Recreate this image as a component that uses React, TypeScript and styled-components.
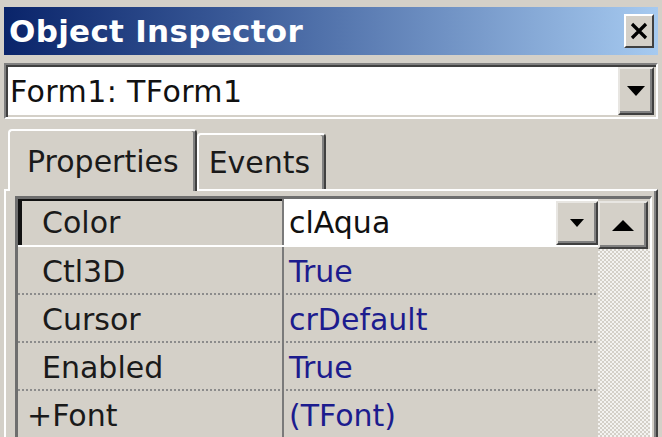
import React from "react";
import styled, { createGlobalStyle } from "styled-components";

const Global = createGlobalStyle`
  html, body { margin: 0; padding: 0; }
  body {
    background: #d4d0c8;
    width: 662px;
    height: 437px;
    overflow: hidden;
    font-family: "DejaVu Sans", Verdana, sans-serif;
  }
`;

const Window = styled.div`
  width: 662px;
  height: 437px;
  box-sizing: border-box;
  padding: 7px 4px 0 4px;
  display: flex;
  flex-direction: column;
  overflow: hidden;
`;

const TitleBar = styled.div`
  height: 48px;
  flex: none;
  display: flex;
  align-items: center;
  justify-content: space-between;
  padding: 0 4px 0 5px;
  background: linear-gradient(to right, #0a246a 0%, #3a5a98 35%, #a6caf0 100%);
`;

const Title = styled.span`
  color: #fff;
  font-weight: bold;
  font-size: 31px;
  letter-spacing: 0.3px;
  line-height: 1;
`;

const CloseButton = styled.div`
  width: 30px;
  height: 34px;
  box-sizing: border-box;
  background: #d4d0c8;
  border-top: 2px solid #fff;
  border-left: 2px solid #fff;
  border-right: 2px solid #404040;
  border-bottom: 2px solid #404040;
  display: flex;
  align-items: center;
  justify-content: center;
`;

const Combo = styled.div`
  margin-top: 8px;
  height: 56px;
  flex: none;
  box-sizing: border-box;
  display: flex;
  border-top: 2px solid #808080;
  border-left: 2px solid #808080;
  border-right: 2px solid #fff;
  border-bottom: 2px solid #fff;
  box-shadow: inset 2px 2px 0 #404040, inset -2px -2px 0 #d4d0c8;
  background: #fff;
`;

const ComboText = styled.div`
  flex: 1;
  display: flex;
  align-items: center;
  padding-left: 4px;
  font-size: 30px;
  color: #111;
  letter-spacing: 0.4px;
`;

const ArrowButton = styled.div<{ $w: number; $h: number }>`
  width: ${(p) => p.$w}px;
  height: ${(p) => p.$h}px;
  flex: none;
  box-sizing: border-box;
  background: #d4d0c8;
  border-top: 2px solid #e8e6e2;
  border-left: 2px solid #e8e6e2;
  border-right: 2px solid #404040;
  border-bottom: 2px solid #404040;
  box-shadow: inset -2px -2px 0 #808080;
  display: flex;
  align-items: center;
  justify-content: center;
`;

const ComboButtonWrap = styled.div`
  padding: 2px 2px 2px 0;
  display: flex;
`;

const TabStrip = styled.div`
  margin-top: 10px;
  height: 60px;
  flex: none;
  display: flex;
  align-items: flex-end;
  padding-left: 4px;
`;

const Tab = styled.div<{ $active?: boolean }>`
  box-sizing: border-box;
  height: ${(p) => (p.$active ? 62 : 56)}px;
  margin-bottom: ${(p) => (p.$active ? -2 : 0)}px;
  padding: 0 ${(p) => (p.$active ? 16 : 14)}px 0 ${(p) => (p.$active ? 17 : 10)}px;
  display: flex;
  align-items: center;
  font-size: 30px;
  color: #1a1a1a;
  background: #d4d0c8;
  border-top: 2px solid #fff;
  border-left: 2px solid #fff;
  border-right: 2px solid #404040;
  box-shadow: inset -2px 0 0 #808080;
  border-radius: 4px 4px 0 0;
  position: relative;
  z-index: ${(p) => (p.$active ? 2 : 1)};
`;

const Page = styled.div`
  flex: 1;
  box-sizing: border-box;
  border-top: 2px solid #fff;
  border-left: 2px solid #fff;
  border-right: 2px solid #404040;
  box-shadow: inset -2px 0 0 #808080;
  padding: 5px 4px 0 9px;
  display: flex;
  min-height: 0;
`;

const Grid = styled.div`
  flex: 1;
  display: flex;
  box-sizing: border-box;
  border-top: 3px solid #6e6e6e;
  border-left: 3px solid #6e6e6e;
  border-right: 2px solid #fff;
  min-height: 0;
`;

const Rows = styled.div`
  flex: 1;
  display: flex;
  flex-direction: column;
`;

const Row = styled.div<{ $selected?: boolean }>`
  height: 48px;
  flex: none;
  box-sizing: border-box;
  display: flex;
  ${(p) =>
    p.$selected
      ? `border-bottom: 2px solid #fff;`
      : `background-image: linear-gradient(to right, #8c8c8c 50%, transparent 50%);
         background-size: 4px 2px;
         background-repeat: repeat-x;
         background-position: left bottom;`}
`;

const NameCell = styled.div<{ $selected?: boolean; $indent: number }>`
  width: 266px;
  flex: none;
  box-sizing: border-box;
  display: flex;
  align-items: center;
  padding-left: ${(p) => p.$indent}px;
  font-size: 30px;
  color: #1a1a1a;
  border-right: 2px solid #7a7a7a;
  ${(p) => (p.$selected ? `border-left: 4px solid #111; box-shadow: inset 0 2px 0 #111;` : ``)}
`;

const ValueCell = styled.div<{ $selected?: boolean }>`
  flex: 1;
  display: flex;
  align-items: center;
  padding-left: 5px;
  font-size: 30px;
  color: ${(p) => (p.$selected ? "#111" : "#1c1c8e")};
  background: ${(p) => (p.$selected ? "#fff" : "transparent")};
`;

const ValueText = styled.span`
  flex: 1;
`;

const EditorButtonWrap = styled.div`
  align-self: flex-start;
  padding-top: 2px;
  display: flex;
`;

const Scroll = styled.div`
  width: 52px;
  flex: none;
  display: flex;
  flex-direction: column;
  background-color: #fff;
  background-image: repeating-conic-gradient(#d4d0c8 0% 25%, #f4f3f1 0% 50%);
  background-size: 4px 4px;
`;

const ScrollUpWrap = styled.div`
  padding-top: 2px;
  background: #d4d0c8;
  display: flex;
`;

const Triangle = ({ dir, w, h }: { dir: "up" | "down"; w: number; h: number }) => (
  <svg width={w} height={h} viewBox={`0 0 ${w} ${h}`}>
    {dir === "down" ? (
      <polygon points={`0,0 ${w},0 ${w / 2},${h}`} fill="#000" />
    ) : (
      <polygon points={`0,${h} ${w},${h} ${w / 2},0`} fill="#000" />
    )}
  </svg>
);

const props = [
  { name: "Color", value: "clAqua", selected: true },
  { name: "Ctl3D", value: "True" },
  { name: "Cursor", value: "crDefault" },
  { name: "Enabled", value: "True" },
  { name: "+Font", value: "(TFont)", expand: true },
];

export default function App() {
  return (
    <>
      <Global />
      <Window>
        <TitleBar>
          <Title>Object Inspector</Title>
          <CloseButton>
            <svg width="18" height="18" viewBox="0 0 18 18">
              <path d="M2 2 L16 16 M16 2 L2 16" stroke="#000" strokeWidth="3.2" />
            </svg>
          </CloseButton>
        </TitleBar>
        <Combo>
          <ComboText>Form1: TForm1</ComboText>
          <ComboButtonWrap>
            <ArrowButton $w={36} $h={48}>
              <Triangle dir="down" w={18} h={10} />
            </ArrowButton>
          </ComboButtonWrap>
        </Combo>
        <TabStrip>
          <Tab $active>Properties</Tab>
          <Tab>Events</Tab>
        </TabStrip>
        <Page>
          <Grid>
            <Rows>
              {props.map((p) => (
                <Row key={p.name} $selected={p.selected}>
                  <NameCell $selected={p.selected} $indent={p.selected ? 20 : p.expand ? 9 : 24}>
                    {p.name}
                  </NameCell>
                  <ValueCell $selected={p.selected}>
                    <ValueText>{p.value}</ValueText>
                    {p.selected && (
                      <EditorButtonWrap>
                        <ArrowButton $w={42} $h={44}>
                          <Triangle dir="down" w={14} h={8} />
                        </ArrowButton>
                      </EditorButtonWrap>
                    )}
                  </ValueCell>
                </Row>
              ))}
            </Rows>
            <Scroll>
              <ScrollUpWrap>
                <ArrowButton $w={50} $h={48}>
                  <Triangle dir="up" w={22} h={11} />
                </ArrowButton>
              </ScrollUpWrap>
            </Scroll>
          </Grid>
        </Page>
      </Window>
    </>
  );
}
